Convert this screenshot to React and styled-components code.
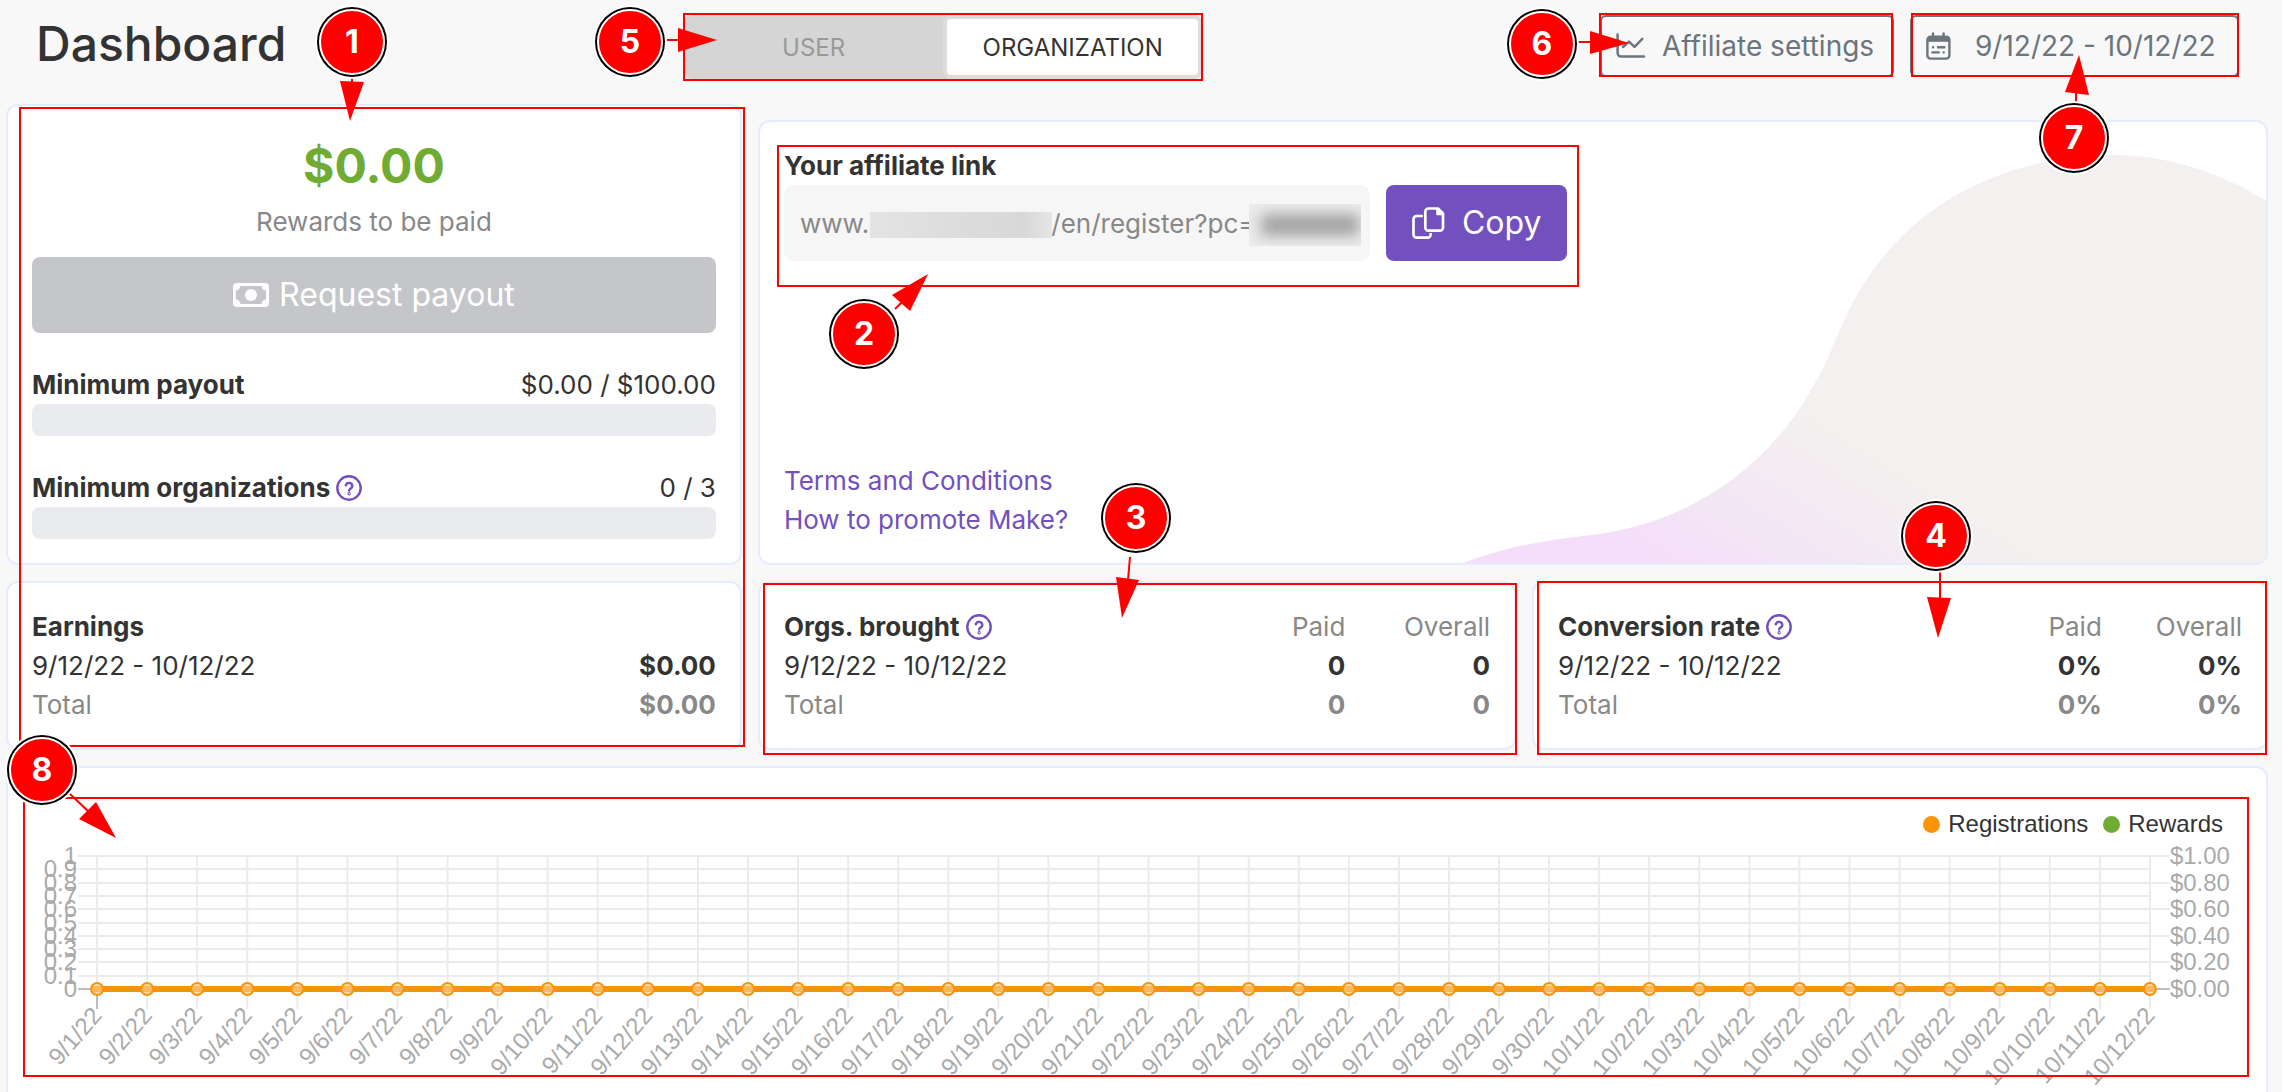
import React from "react";
import styled, { createGlobalStyle, css } from "styled-components";

const color = {
  page: "#f8f8f8",
  card: "#ffffff",
  line: "#e4ecfd",
  text: "#333333",
  muted: "#888888",
  brand: "#7250bd",
  green: "#70ab33",
  orange: "#fa930a",
  slate: "#6c757d",
  mark: "#ff0000",
};

const GlobalStyle = createGlobalStyle`
  *, *::before, *::after { box-sizing: border-box; }
  body {
    margin: 0;
    background: ${color.page};
    color: ${color.text};
    font-family: Inter, "Liberation Sans", sans-serif;
    font-size: 26px;
    line-height: 39px;
  }
  button, input { font: inherit; }
`;

const Page = styled.div`
  position: relative;
  height: 100vh;
  overflow: hidden;
`;

const Header = styled.header`
  display: flex;
  justify-content: space-between;
  align-items: flex-start;
  padding: 15px 43px 25px 36px;
`;

const Title = styled.h1`
  margin: 0;
  font-size: 48px;
  line-height: 58px;
  font-weight: 500;
`;

const Toggle = styled.div`
  display: grid;
  grid-template-columns: 1fr 1fr;
  width: 518px;
  height: 64px;
  border-radius: 8px;
  background: #d5d5d5;
`;

const ToggleOption = styled.button`
  padding: 2px 0 0;
  border: 4px solid ${(p) => (p.$active ? "#dddddd" : "#d5d5d5")};
  border-radius: 8px;
  background: ${(p) => (p.$active ? "#ffffff" : "#d5d5d5")};
  color: ${(p) => (p.$active ? color.text : "#999999")};
  font-size: 24px;
  line-height: 32px;
`;

const Actions = styled.div`
  display: flex;
  gap: 16px;
`;

const OutlineButton = styled.button`
  display: flex;
  align-items: center;
  gap: ${(p) => p.$gap}px;
  min-width: ${(p) => p.$width}px;
  height: 62px;
  padding: 0 14px;
  border: 2px solid ${color.slate};
  border-radius: 6px;
  background: transparent;
  color: ${color.slate};
  font-size: 28px;
  line-height: 40px;
  white-space: nowrap;
`;

const Cards = styled.main`
  display: grid;
  grid-template-columns: minmax(0, 33fr) minmax(0, 34fr) minmax(0, 33fr);
  gap: 16px;
  padding: 0 14px 16px 6px;
`;

const Card = styled.section`
  padding: 24px;
  border: 2px solid ${color.line};
  border-radius: 12px;
  background: ${color.card};
`;

const LinkCard = styled(Card)`
  position: relative;
  display: flex;
  flex-direction: column;
  justify-content: space-between;
  grid-column: span 2;
  margin-top: 16px;
  overflow: hidden;
`;

const ChartCard = styled(Card)`
  grid-column: 1 / -1;
  padding: 42px 0 24px;
`;

const Amount = styled.p`
  margin: 0;
  color: ${color.green};
  font-size: 48px;
  line-height: 72px;
  font-weight: 700;
  text-align: center;
`;

const Caption = styled.p`
  margin: 0 0 16px;
  color: ${color.muted};
  text-align: center;
`;

const solidButton = css`
  display: flex;
  align-items: center;
  justify-content: center;
  height: 76px;
  border: 0;
  border-radius: 8px;
  color: #ffffff;
  font-size: 32px;
  line-height: 48px;
`;

const PayoutButton = styled.button`
  ${solidButton}
  gap: 10px;
  width: 100%;
  background: #c5c6ca;
`;

const CopyButton = styled.button`
  ${solidButton}
  gap: 17px;
  padding: 0 26px;
  background: ${color.brand};
`;

const Goal = styled.div`
  margin-top: 32px;
`;

const GoalHead = styled.div`
  display: flex;
  justify-content: space-between;
`;

const Label = styled.span`
  display: inline-flex;
  align-items: center;
  gap: 6px;
  font-weight: 700;
`;

const Track = styled.div`
  height: 32px;
  border-radius: 8px;
  background: #eaebef;
`;

const HelpButton = styled.button`
  display: flex;
  padding: 0;
  border: 0;
  background: none;
  color: ${color.brand};
`;

const LinkBlock = styled.div`
  position: relative;
`;

const FieldLabel = styled.label`
  display: block;
  font-weight: 700;
`;

const FieldRow = styled.div`
  display: flex;
  gap: 16px;
`;

const Field = styled.div`
  position: relative;
  width: 586px;
`;

const LinkInput = styled.input`
  width: 100%;
  height: 76px;
  padding: 0 16px;
  border: 0;
  border-radius: 10px;
  background: #f6f6f6;
  color: ${color.muted};
`;

const HostMask = styled.span`
  position: absolute;
  top: 27px;
  left: 86px;
  width: 182px;
  height: 26px;
  background: linear-gradient(90deg, #e4e4e4, #dcdcdc 50%, #d8d8d8 85%, #e6e6e6);
`;

const CodeMask = styled.span`
  position: absolute;
  top: 19px;
  left: 465px;
  width: 112px;
  height: 42px;
  overflow: hidden;
  background: #ececec;
  &::before {
    content: "";
    position: absolute;
    inset: 10px 2px 10px 12px;
    background: #a4a4a4;
    filter: blur(7px);
  }
`;

const Links = styled.nav`
  position: relative;
  display: flex;
  flex-direction: column;
  align-items: flex-start;
`;

const TextLink = styled.a`
  color: ${color.brand};
  text-decoration: none;
`;

const Wave = styled.svg`
  position: absolute;
  right: 0;
  bottom: 0;
  width: 802px;
  height: 441px;
`;

const Stats = styled.table`
  width: 100%;
  table-layout: fixed;
  border-collapse: collapse;

  th, td {
    padding: 0;
    height: 39px;
    text-align: right;
    font-weight: 700;
  }
  th:first-child {
    text-align: left;
    font-weight: 400;
  }
  thead th {
    width: 20.5%;
    color: ${color.muted};
    font-weight: 400;
  }
  thead th:first-child {
    width: auto;
    color: ${color.text};
  }
  tbody tr:last-child {
    color: ${color.muted};
  }
`;

const Legend = styled.ul`
  display: flex;
  justify-content: flex-end;
  gap: 15px;
  margin: 0;
  padding: 0 43px 0 0;
  list-style: none;
  font-family: "Liberation Sans", Arial, sans-serif;
  font-size: 24px;
  line-height: 28px;
`;

const LegendItem = styled.li`
  display: flex;
  align-items: center;
  gap: 8px;
  &::before {
    content: "";
    width: 17px;
    height: 17px;
    border-radius: 50%;
    background: ${(p) => p.$color};
  }
`;

const Plot = styled.svg`
  display: block;
  width: 100%;
  height: auto;
  font-family: "Liberation Sans", Arial, sans-serif;
  font-size: 24px;
  fill: #aaaaaa;
`;

const Notes = styled.div`
  position: absolute;
  inset: 0;
  pointer-events: none;
`;

const Frame = styled.div`
  position: absolute;
  left: ${(p) => p.$box[0]}px;
  top: ${(p) => p.$box[1]}px;
  width: ${(p) => p.$box[2] - p.$box[0]}px;
  height: ${(p) => p.$box[3] - p.$box[1]}px;
  border: 2px solid ${color.mark};
`;

const Arrows = styled.svg`
  position: absolute;
  top: 0;
  left: 0;
  overflow: visible;
`;

const Badge = styled.span`
  position: absolute;
  left: ${(p) => p.$x - 33}px;
  top: ${(p) => p.$y - 33}px;
  display: flex;
  align-items: center;
  justify-content: center;
  width: 66px;
  height: 66px;
  border: 2px solid #ffffff;
  border-radius: 50%;
  box-shadow: 0 0 0 2px #000000, 0 0 0 4px #ffffff;
  background: ${color.mark};
  color: #ffffff;
  font-size: 32px;
  line-height: 40px;
  font-weight: 700;
`;

const TrendIcon = () => (
  <svg width="30" height="26" viewBox="0 0 30 26" fill="none" stroke="currentColor" strokeWidth="2.5" strokeLinecap="round" strokeLinejoin="round" aria-hidden="true">
    <path d="M1.6 1.4V20a3.6 3.6 0 0 0 3.6 3.6H28" />
    <path d="M7 14l6-5.4 5.5 5.2 7.8-8" />
  </svg>
);

const CalendarIcon = () => (
  <svg width="25" height="28" viewBox="0 0 25 28" fill="none" stroke="currentColor" strokeWidth="2.4" strokeLinecap="round" aria-hidden="true">
    <rect x="1.4" y="4.6" width="22" height="22" rx="3.2" />
    <path d="M1.4 5h22v4.6h-22z" fill="currentColor" stroke="none" />
    <path d="M1.4 8h22" strokeLinecap="butt" strokeWidth="3" />
    <path d="M7 1.4v4M17.6 1.4v4M7 15.3h.1M12 15.3h6.4M6.4 20.4h6.4M17.6 20.4h.1" />
  </svg>
);

const CashIcon = () => (
  <svg width="36" height="24" viewBox="0 0 36 24" fill="currentColor" aria-hidden="true">
    <path
      fillRule="evenodd"
      d="M4 0h28a4 4 0 0 1 4 4v16a4 4 0 0 1-4 4H4a4 4 0 0 1-4-4V4a4 4 0 0 1 4-4zM7.4 3A4.6 4.6 0 0 1 2.8 7.6V16.4A4.6 4.6 0 0 1 7.4 21H28.6A4.6 4.6 0 0 1 33.2 16.4V7.6A4.6 4.6 0 0 1 28.6 3z"
    />
    <circle cx="18" cy="12" r="6" />
  </svg>
);

const CopyIcon = () => (
  <svg width="33" height="33" viewBox="0 0 33 33" fill="none" stroke="currentColor" strokeWidth="2.7" strokeLinejoin="round" aria-hidden="true">
    <path d="M16.5 1.5H26L31 6.5V20.5a3.2 3.2 0 0 1-3.2 3.2H16.5a3.2 3.2 0 0 1-3.2-3.2V4.7a3.2 3.2 0 0 1 3.2-3.2z" />
    <path d="M25 1.5V7.5h6z" fill="currentColor" strokeWidth="1.5" />
    <path d="M11 9H4.7a3.2 3.2 0 0 0-3.2 3.2V27.5a3.2 3.2 0 0 0 3.2 3.2H15.5a3.2 3.2 0 0 0 3.2-3.2V26" />
  </svg>
);

const Help = ({ about }) => (
  <HelpButton type="button" aria-label={`About ${about}`}>
    <svg width="26" height="26" viewBox="0 0 26 26" fill="none" stroke="currentColor" strokeWidth="2.4" strokeLinecap="round" strokeLinejoin="round" aria-hidden="true">
      <circle cx="13" cy="13" r="11.7" />
      <path d="M9.8 10.4a3.3 3.3 0 0 1 6.5.8c0 2.1-3.2 2.3-3.2 4.3" />
      <circle cx="13.1" cy="18.8" r="0.5" />
    </svg>
  </HelpButton>
);

const period = "9/12/22 - 10/12/22";

const StatCard = ({ title, help, columns, rows }) => (
  <Card>
    <Stats>
      <thead>
        <tr>
          <th scope="col">
            <Label>
              {title}
              {help && <Help about={title} />}
            </Label>
          </th>
          {columns.map((c, i) => (
            <th scope="col" key={i}>{c}</th>
          ))}
        </tr>
      </thead>
      <tbody>
        {[period, "Total"].map((name, r) => (
          <tr key={name}>
            <th scope="row">{name}</th>
            {rows[r].map((v, i) => (
              <td key={i}>{v}</td>
            ))}
          </tr>
        ))}
      </tbody>
    </Stats>
  </Card>
);

const days = [
  ...Array.from({ length: 30 }, (_, i) => `9/${i + 1}/22`),
  ...Array.from({ length: 12 }, (_, i) => `10/${i + 1}/22`),
];

const plot = { left: 89, right: 2142, top: 18, bottom: 151 };
const dayX = (i) => plot.left + ((plot.right - plot.left) * i) / (days.length - 1);
const tickY = (t) => Math.round(plot.bottom - ((plot.bottom - plot.top) * t) / 10);

const Chart = () => (
  <Plot viewBox="0 0 2258 254" role="img" aria-label="Registrations and rewards per day">
    <g stroke="#ebebeb" strokeWidth="2">
      {Array.from({ length: 11 }, (_, t) => (
        <line key={t} x1={plot.left - 19} x2={t % 2 ? plot.right : plot.right + 20} y1={tickY(t)} y2={tickY(t)} />
      ))}
      {days.map((d, i) => (
        <line key={d} x1={dayX(i)} x2={dayX(i)} y1={plot.top} y2={plot.bottom + 20} />
      ))}
    </g>
    <path
      d={`M${plot.left - 19} ${plot.bottom}H${plot.left}V${plot.bottom + 20}M${plot.right} ${plot.bottom}h20`}
      stroke="#bcbcbc"
      strokeWidth="2"
      fill="none"
    />
    {Array.from({ length: 11 }, (_, t) => (
      <text key={t} x={plot.left - 20} y={tickY(t) + 8} textAnchor="end">{t / 10}</text>
    ))}
    {[0, 2, 4, 6, 8, 10].map((t) => (
      <text key={t} x={plot.right + 20} y={tickY(t) + 8}>${(t / 10).toFixed(2)}</text>
    ))}
    {days.map((d, i) => (
      <text key={d} x="0" y="8" textAnchor="end" transform={`translate(${dayX(i)} ${plot.bottom + 22}) rotate(-49)`}>
        {d}
      </text>
    ))}
    <line x1={plot.left} x2={plot.right} y1={plot.bottom} y2={plot.bottom} stroke={color.orange} strokeWidth="6" />
    {days.map((d, i) => (
      <g key={d}>
        <circle cx={dayX(i)} cy={plot.bottom} r="6" fill="#ecdca6" />
        <rect x={dayX(i) - 5} y={plot.bottom - 3} width="10" height="6" fill="#fbb75c" />
        <circle cx={dayX(i)} cy={plot.bottom} r="6" fill="none" stroke={color.orange} strokeWidth="2" />
      </g>
    ))}
  </Plot>
);

const frames = [
  [19, 107, 745, 747],
  [777, 145, 1579, 287],
  [763, 583, 1517, 755],
  [1537, 581, 2267, 755],
  [683, 13, 1203, 81],
  [1599, 13, 1893, 77],
  [1911, 13, 2239, 77],
  [23, 797, 2249, 1077],
];

const badges = [
  [352, 42],
  [864, 334],
  [1136, 518],
  [1936, 536],
  [630, 42],
  [1542, 44],
  [2074, 138],
  [42, 770],
];

const arrows = [
  { line: "M352 75V84", head: "340,81 364,82 350,121" },
  { line: "M895 309L903 301", head: "892,295 910,311 928,274" },
  { line: "M1130 557L1128 580", head: "1116,577 1139,580 1122,618" },
  { line: "M1940 571V600", head: "1927,597 1951,598 1938,638" },
  { line: "M667 40H680", head: "678,28 678,52 717,40" },
  { line: "M1577 42H1592", head: "1590,31 1590,54 1629,43" },
  { line: "M2076 103V92", head: "2065,92 2089,95 2079,55" },
  { line: "M69 793L90 813", head: "96,802 79,819 116,838" },
];

const Annotations = () => (
  <Notes>
    {frames.map((box, i) => (
      <Frame key={i} $box={box} />
    ))}
    <Arrows width="100" height="100" fill={color.mark} aria-hidden="true">
      {arrows.map((a) => (
        <g key={a.line}>
          <path d={a.line} stroke={color.mark} strokeWidth="2" fill="none" />
          <polygon points={a.head} />
        </g>
      ))}
    </Arrows>
    {badges.map(([x, y], i) => (
      <Badge key={i} $x={x} $y={y}>{i + 1}</Badge>
    ))}
  </Notes>
);

const hiddenHost = "\u2003".repeat(7);

export default function App() {
  return (
    <Page>
      <GlobalStyle />
      <Header>
        <Title>Dashboard</Title>
        <Toggle role="group" aria-label="Scope">
          <ToggleOption type="button" aria-pressed="false">USER</ToggleOption>
          <ToggleOption type="button" aria-pressed="true" $active>ORGANIZATION</ToggleOption>
        </Toggle>
        <Actions>
          <OutlineButton type="button" $gap={16} $width={294}>
            <TrendIcon />
            Affiliate settings
          </OutlineButton>
          <OutlineButton type="button" $gap={24} $width={329}>
            <CalendarIcon />
            {period}
          </OutlineButton>
        </Actions>
      </Header>

      <Cards>
        <Card>
          <Amount>$0.00</Amount>
          <Caption>Rewards to be paid</Caption>
          <PayoutButton type="button">
            <CashIcon />
            Request payout
          </PayoutButton>
          <Goal>
            <GoalHead>
              <Label>Minimum payout</Label>
              <span>$0.00 / $100.00</span>
            </GoalHead>
            <Track role="progressbar" aria-label="Minimum payout" aria-valuenow={0} aria-valuemax={100} />
          </Goal>
          <Goal>
            <GoalHead>
              <Label>
                Minimum organizations
                <Help about="minimum organizations" />
              </Label>
              <span>0 / 3</span>
            </GoalHead>
            <Track role="progressbar" aria-label="Minimum organizations" aria-valuenow={0} aria-valuemax={3} />
          </Goal>
        </Card>

        <LinkCard>
          <Wave viewBox="1464 122 802 441" aria-hidden="true">
            <defs>
              <linearGradient id="wave" gradientUnits="userSpaceOnUse" x1="1640" y1="560" x2="1752" y2="382">
                <stop offset="0" stopColor="#f4defa" />
                <stop offset="1" stopColor="#f3f0ef" />
              </linearGradient>
            </defs>
            <path
              fill="url(#wave)"
              d="M1464 563C1510 545 1550 540 1592 535C1680 524 1755 478 1804 402C1820 376 1828 358 1840 330C1885 218 1990 155 2115 155C2170 155 2225 175 2266 201V563Z"
            />
          </Wave>
          <LinkBlock>
            <FieldLabel htmlFor="affiliate-link">Your affiliate link</FieldLabel>
            <FieldRow>
              <Field>
                <LinkInput id="affiliate-link" readOnly value={`www.${hiddenHost}/en/register?pc=`} />
                <HostMask />
                <CodeMask />
              </Field>
              <CopyButton type="button">
                <CopyIcon />
                Copy
              </CopyButton>
            </FieldRow>
          </LinkBlock>
          <Links>
            <TextLink href="#terms">Terms and Conditions</TextLink>
            <TextLink href="#promote">How to promote Make?</TextLink>
          </Links>
        </LinkCard>

        <StatCard title="Earnings" columns={[""]} rows={[["$0.00"], ["$0.00"]]} />
        <StatCard title="Orgs. brought" help columns={["Paid", "Overall"]} rows={[["0", "0"], ["0", "0"]]} />
        <StatCard title="Conversion rate" help columns={["Paid", "Overall"]} rows={[["0%", "0%"], ["0%", "0%"]]} />

        <ChartCard>
          <Legend>
            <LegendItem $color={color.orange}>Registrations</LegendItem>
            <LegendItem $color={color.green}>Rewards</LegendItem>
          </Legend>
          <Chart />
        </ChartCard>
      </Cards>

      <Annotations />
    </Page>
  );
}
